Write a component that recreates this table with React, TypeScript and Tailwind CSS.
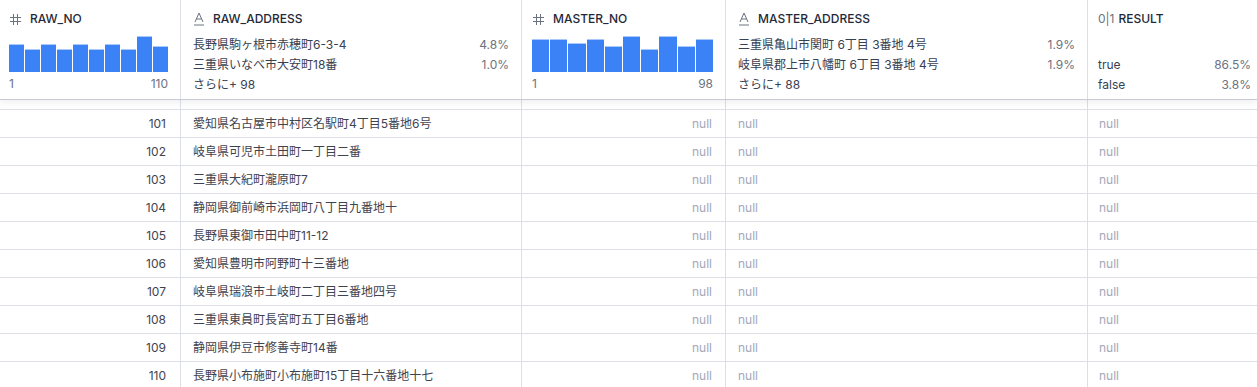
import React from "react";

interface Row {
  no: number;
  address: string;
}

const ROWS: Row[] = [
  { no: 101, address: "愛知県名古屋市中村区名駅町4丁目5番地6号" },
  { no: 102, address: "岐阜県可児市土田町一丁目二番" },
  { no: 103, address: "三重県大紀町瀧原町7" },
  { no: 104, address: "静岡県御前崎市浜岡町八丁目九番地十" },
  { no: 105, address: "長野県東御市田中町11-12" },
  { no: 106, address: "愛知県豊明市阿野町十三番地" },
  { no: 107, address: "岐阜県瑞浪市土岐町二丁目三番地四号" },
  { no: 108, address: "三重県東員町長宮町五丁目6番地" },
  { no: 109, address: "静岡県伊豆市修善寺町14番" },
  { no: 110, address: "長野県小布施町小布施町15丁目十六番地十七" },
];

const RAW_BARS = [28, 23, 28, 23, 28, 23, 28, 23, 36, 26];
const MASTER_BARS = [33, 33, 29, 33, 26, 36, 23, 36, 26, 33];

const cell = "border-r border-[#dcdee8] h-[27px] flex items-center";

function HashIcon() {
  return (
    <svg width="13" height="13" viewBox="0 0 13 13" className="shrink-0">
      <g stroke="#6b7280" strokeWidth="1" fill="none">
        <line x1="4.5" y1="1" x2="4.5" y2="12" />
        <line x1="8.5" y1="1" x2="8.5" y2="12" />
        <line x1="1" y1="4.5" x2="12" y2="4.5" />
        <line x1="1" y1="8.5" x2="12" y2="8.5" />
      </g>
    </svg>
  );
}

function TextIcon() {
  return (
    <svg width="12" height="14" viewBox="0 0 12 14" className="shrink-0">
      <g stroke="#6b7280" strokeWidth="1" fill="none">
        <polyline points="2,10 6,1 10,10" />
        <line x1="3.5" y1="7" x2="8.5" y2="7" />
        <line x1="1" y1="13" x2="11" y2="13" />
      </g>
    </svg>
  );
}

function Histogram({ bars, max }: { bars: number[]; max: string }) {
  return (
    <div className="mt-[9px]">
      <div className="flex items-end gap-px h-9">
        {bars.map((h, i) => (
          <div
            key={i}
            className="flex-1 bg-[#3b82f6] border-t border-[#a9c9fb]"
            style={{ height: h }}
          />
        ))}
      </div>
      <div className="flex justify-between text-xs text-[#6b7280] mt-[4px] leading-4">
        <span>1</span>
        <span>{max}</span>
      </div>
    </div>
  );
}

function ValueRow({ label, pct }: { label: string; pct?: string }) {
  return (
    <div className="flex justify-between h-5 items-center text-xs text-[#374151]">
      <span>{label}</span>
      {pct && <span className="text-[#6b7280]">{pct}</span>}
    </div>
  );
}

export default function App() {
  return (
    <div className="w-[1257px] h-[387px] overflow-hidden bg-white font-['Inter','Noto_Sans_CJK_JP',sans-serif] relative">
      {/* Header */}
      <div className="relative z-10 grid grid-cols-[181px_341px_204px_362px_1fr] h-[100px] bg-white border-b border-[#c8cad6] shadow-[0_3px_6px_rgba(0,0,0,0.06)]">
        <div className="border-r border-[#dcdee8] pl-[9px] pr-3 pt-[11px]">
          <div className="flex items-center gap-2 text-xs font-medium text-[#1f2937] h-4">
            <HashIcon />
            <span>RAW_NO</span>
          </div>
          <Histogram bars={RAW_BARS} max="110" />
        </div>
        <div className="border-r border-[#dcdee8] px-3 pt-[11px]">
          <div className="flex items-center gap-2 text-xs font-medium text-[#1f2937] h-4">
            <TextIcon />
            <span>RAW_ADDRESS</span>
          </div>
          <div className="mt-[8px]">
            <ValueRow label="長野県駒ヶ根市赤穂町6-3-4" pct="4.8%" />
            <ValueRow label="三重県いなべ市大安町18番" pct="1.0%" />
            <ValueRow label="さらに+ 98" />
          </div>
        </div>
        <div className="border-r border-[#dcdee8] pl-[10px] pr-3 pt-[11px]">
          <div className="flex items-center gap-2 text-xs font-medium text-[#1f2937] h-4">
            <HashIcon />
            <span>MASTER_NO</span>
          </div>
          <Histogram bars={MASTER_BARS} max="98" />
        </div>
        <div className="border-r border-[#dcdee8] px-3 pt-[11px]">
          <div className="flex items-center gap-2 text-xs font-medium text-[#1f2937] h-4">
            <TextIcon />
            <span>MASTER_ADDRESS</span>
          </div>
          <div className="mt-[8px]">
            <ValueRow label="三重県亀山市関町 6丁目 3番地 4号" pct="1.9%" />
            <ValueRow label="岐阜県郡上市八幡町 6丁目 3番地 4号" pct="1.9%" />
            <ValueRow label="さらに+ 88" />
          </div>
        </div>
        <div className="pl-[10px] pr-[6px] pt-[11px]">
          <div className="flex items-center gap-1 text-xs font-medium text-[#1f2937] h-4">
            <span className="text-[#6b7280] font-normal">0|1</span>
            <span>RESULT</span>
          </div>
          <div className="mt-[28px]">
            <ValueRow label="true" pct="86.5%" />
            <ValueRow label="false" pct="3.8%" />
          </div>
        </div>
      </div>

      {/* Body: first row is scrolled mostly under the header */}
      <div className="mt-[-18px] text-xs">
        <div className="grid grid-cols-[181px_341px_204px_362px_1fr] border-b border-[#dcdee8]">
          <div className={cell} />
          <div className={cell} />
          <div className={cell} />
          <div className={cell} />
          <div className="h-[27px]" />
        </div>
        {ROWS.map((row) => (
          <div
            key={row.no}
            className="grid grid-cols-[181px_341px_204px_362px_1fr] border-b border-[#dcdee8]"
          >
            <div className={`${cell} justify-end pr-[14px] text-[#3f4350]`}>{row.no}</div>
            <div className={`${cell} px-3 text-[#3f4350]`}>{row.address}</div>
            <div className={`${cell} justify-end pr-[13px] text-[#a3a7ba]`}>null</div>
            <div className={`${cell} px-3 text-[#a3a7ba]`}>null</div>
            <div className="h-[27px] flex items-center pl-[11px] text-[#a3a7ba]">null</div>
          </div>
        ))}
      </div>
    </div>
  );
}
